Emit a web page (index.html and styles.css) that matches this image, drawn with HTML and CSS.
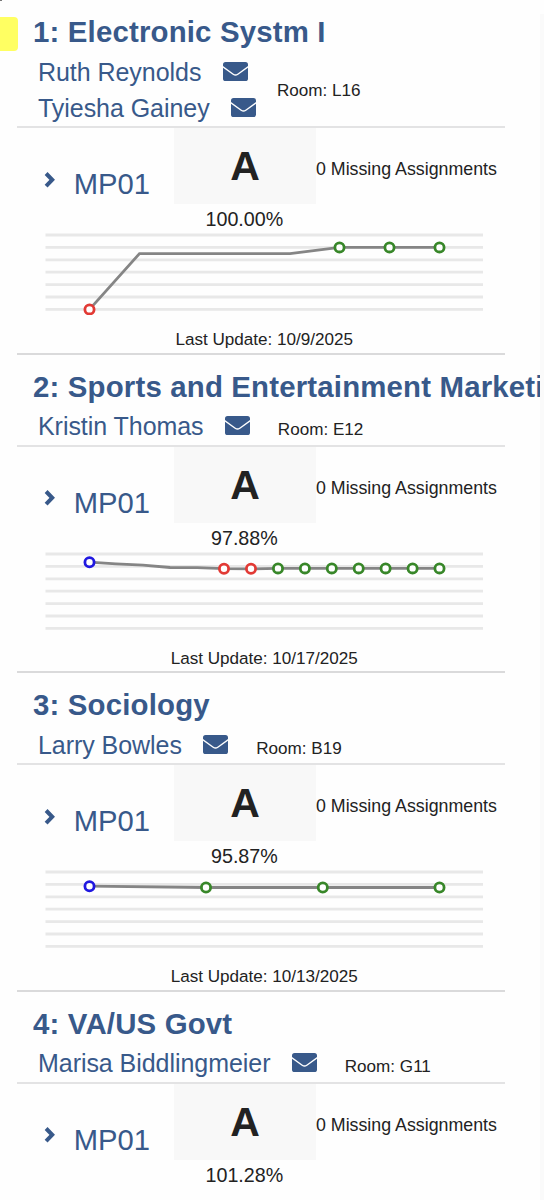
FILE: index.html
```html
<!DOCTYPE html>
<html lang="en">
<head>
<meta charset="utf-8">
<title>Grades</title>
<link rel="stylesheet" href="styles.css">
</head>
<body>
<svg class="defs" width="0" height="0" aria-hidden="true">
  <symbol id="mail" viewBox="0 0 25 19">
    <rect width="25" height="19" rx="2.6" fill="#38598a"/>
    <path d="M-.5 4.6 L10.2 12.2 Q12.5 13.8 14.8 12.2 L25.5 4.6" fill="none" stroke="#fefefe" stroke-width="1.4"/>
  </symbol>
  <symbol id="chevron" viewBox="0 0 12 16">
    <path d="M2.1 1.5 L8.2 7.8 L2.1 14.1" fill="none" stroke="#38598a" stroke-width="4"/>
  </symbol>
  <symbol id="grid" viewBox="0 0 439 84">
    <path d="M.5 4H438M.5 16.4H438M.5 28.8H438M.5 41.2H438M.5 53.6H438M.5 66H438M.5 78.4H438" stroke="#e8e8e8" stroke-width="2.8"/>
  </symbol>
</svg>
<div class="tab"></div>
<div class="corner"></div>
<main class="page">
  <section class="course">
    <header class="head">
      <h2 class="title">1: Electronic Systm I</h2>
      <div class="staff double">
        <div class="teachers">
          <div class="teacher"><a class="name">Ruth Reynolds</a><svg class="mail"><use href="#mail"/></svg></div>
          <div class="teacher"><a class="name">Tyiesha Gainey</a><svg class="mail"><use href="#mail"/></svg></div>
        </div>
        <span class="room">Room: L16</span>
      </div>
    </header>
    <div class="body">
      <div class="marks">
        <div class="period"><svg class="chevron"><use href="#chevron"/></svg><span>MP01</span></div>
        <div class="grade">A</div>
        <div class="missing">0 Missing Assignments</div>
      </div>
      <div class="percent">100.00%</div>
      <svg class="chart" viewBox="0 0 439 84">
        <use href="#grid"/>
        <polyline class="trend" points="44.5,78.4 94.5,22.6 245,22.6 294.5,16.4 394.5,16.4"/>
        <circle class="dot red" cx="44.5" cy="78.4" r="4.6"/>
        <circle class="dot green" cx="294.5" cy="16.4" r="4.6"/>
        <circle class="dot green" cx="344.5" cy="16.4" r="4.6"/>
        <circle class="dot green" cx="394.5" cy="16.4" r="4.6"/>
      </svg>
      <div class="update">Last Update: 10/9/2025</div>
    </div>
  </section>

  <section class="course">
    <header class="head">
      <h2 class="title">2: Sports and Entertainment Marketi</h2>
      <div class="staff">
        <div class="teacher"><a class="name">Kristin Thomas</a><svg class="mail"><use href="#mail"/></svg></div>
        <span class="room">Room: E12</span>
      </div>
    </header>
    <div class="body">
      <div class="marks">
        <div class="period"><svg class="chevron"><use href="#chevron"/></svg><span>MP01</span></div>
        <div class="grade">A</div>
        <div class="missing">0 Missing Assignments</div>
      </div>
      <div class="percent">97.88%</div>
      <svg class="chart" viewBox="0 0 439 84">
        <use href="#grid"/>
        <polyline class="trend" points="44.5,12.2 71,13.9 98,15.2 125,17.5 152,17.6 179,18.7 206,18.9 233,18.4 394.5,18.4"/>
        <circle class="dot blue" cx="44.5" cy="12.2" r="4.6"/>
        <circle class="dot red" cx="179" cy="18.8" r="4.6"/>
        <circle class="dot red" cx="206" cy="18.8" r="4.6"/>
        <circle class="dot green" cx="233" cy="18.4" r="4.6"/>
        <circle class="dot green" cx="259.9" cy="18.4" r="4.6"/>
        <circle class="dot green" cx="286.8" cy="18.4" r="4.6"/>
        <circle class="dot green" cx="313.7" cy="18.4" r="4.6"/>
        <circle class="dot green" cx="340.6" cy="18.4" r="4.6"/>
        <circle class="dot green" cx="367.6" cy="18.4" r="4.6"/>
        <circle class="dot green" cx="394.5" cy="18.4" r="4.6"/>
      </svg>
      <div class="update">Last Update: 10/17/2025</div>
    </div>
  </section>

  <section class="course">
    <header class="head">
      <h2 class="title">3: Sociology</h2>
      <div class="staff">
        <div class="teacher"><a class="name">Larry Bowles</a><svg class="mail"><use href="#mail"/></svg></div>
        <span class="room">Room: B19</span>
      </div>
    </header>
    <div class="body">
      <div class="marks">
        <div class="period"><svg class="chevron"><use href="#chevron"/></svg><span>MP01</span></div>
        <div class="grade">A</div>
        <div class="missing">0 Missing Assignments</div>
      </div>
      <div class="percent">95.87%</div>
      <svg class="chart" viewBox="0 0 439 84">
        <use href="#grid"/>
        <polyline class="trend" points="44.5,18.2 161,19.5 394.5,19.5"/>
        <circle class="dot blue" cx="44.5" cy="18.2" r="4.6"/>
        <circle class="dot green" cx="161" cy="19.5" r="4.6"/>
        <circle class="dot green" cx="277.8" cy="19.5" r="4.6"/>
        <circle class="dot green" cx="394.5" cy="19.5" r="4.6"/>
      </svg>
      <div class="update">Last Update: 10/13/2025</div>
    </div>
  </section>

  <section class="course">
    <header class="head">
      <h2 class="title">4: VA/US Govt</h2>
      <div class="staff">
        <div class="teacher"><a class="name">Marisa Biddlingmeier</a><svg class="mail"><use href="#mail"/></svg></div>
        <span class="room">Room: G11</span>
      </div>
    </header>
    <div class="body">
      <div class="marks">
        <div class="period"><svg class="chevron"><use href="#chevron"/></svg><span>MP01</span></div>
        <div class="grade">A</div>
        <div class="missing">0 Missing Assignments</div>
      </div>
      <div class="percent">101.28%</div>
    </div>
  </section>
</main>
<div class="edge"></div>
</body>
</html>
```

FILE: styles.css
```css
* { box-sizing: border-box; }
body {
  margin: 0;
  height: 1200px;
  overflow: hidden;
  display: flex;
  background: #fefefe;
  color: #222;
  font-family: "Liberation Sans", Arial, sans-serif;
}
.defs { position: absolute; }
.tab {
  position: absolute;
  left: 0;
  top: 17px;
  width: 18px;
  height: 34px;
  background: #ffff62;
  border-radius: 0 4px 4px 0;
}
.corner {
  position: absolute;
  left: 0;
  top: 0;
  width: 2px;
  height: 1px;
  background: #777;
}
.page { width: 540px; height: 1200px; overflow: hidden; padding-left: 17px; }
.edge { width: 4px; margin-top: 14px; background: #fafafa; }
.head {
  position: relative;
  padding: 12px 0 2px 16px;
}
.head::after {
  content: "";
  position: absolute;
  left: 0;
  bottom: 0;
  width: 487.5px;
  height: 2px;
  background: #e3e3e4;
}
.title {
  margin: 0 0 2.5px;
  font-size: 29.4px;
  line-height: 40px;
  letter-spacing: .17px;
  font-weight: 700;
  color: #38598a;
  white-space: nowrap;
}
.staff { display: flex; align-items: baseline; padding-left: 5px; }
.double { align-items: center; padding-top: .5px; }
.teacher { display: flex; align-items: center; height: 35.5px; }
.name {
  font-size: 25px;
  line-height: 35.5px;
  letter-spacing: -.05px;
  color: #38598a;
  white-space: nowrap;
}
.mail { width: 25px; height: 19px; margin: -2px 0 0 21.3px; }
.room { margin-left: 28px; font-size: 17.1px; white-space: nowrap; }
.double .room { margin-left: 21px; }
.body {
  width: 487.5px;
  height: 226.5px;
  border-bottom: 2.5px solid #dadadb;
}
.marks { display: grid; grid-template-columns: 157px 142px 1fr; height: 76px; }
.period {
  display: flex;
  align-items: center;
  padding: 36px 0 0 27px;
  height: 76px;
  font-size: 29.2px;
  line-height: 40px;
  color: #38598a;
}
.chevron { width: 12px; height: 16px; margin: -9px 17.8px 0 0; }
.grade {
  background: #f8f8f8;
  text-align: center;
  font-size: 41px;
  font-weight: 700;
  line-height: 76px;
}
.missing {
  padding-top: 30px;
  font-size: 17.8px;
  line-height: 22px;
  white-space: nowrap;
}
.percent {
  width: 142px;
  margin: 3px 0 0 156.4px;
  text-align: center;
  font-size: 19.7px;
  line-height: 24px;
}
.chart { display: block; width: 439px; height: 84px; margin-left: 28px; }
.trend { fill: none; stroke: #858585; stroke-width: 2.8; }
.dot { fill: #fff; stroke-width: 2.8; }
.red { stroke: #e23a35; }
.green { stroke: #388729; }
.blue { stroke: #2018e0; }
.update {
  margin-top: 14.2px;
  padding-left: 7px;
  text-align: center;
  font-size: 17.1px;
  line-height: 22px;
}
```
